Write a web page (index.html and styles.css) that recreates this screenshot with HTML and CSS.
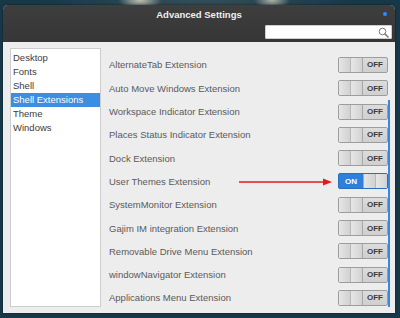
FILE: index.html
```html
<!DOCTYPE html>
<html lang="en">
<head>
    <meta charset="UTF-8">
    <title>Advanced Settings</title>
    <link rel="stylesheet" href="styles.css">
</head>
<body>

<div class="window">
    <div class="titlebar">
        <div class="title">Advanced Settings</div>
        <span class="dot"></span>
        <div class="search">
            <svg width="11" height="11" viewBox="0 0 11 11">
                <circle cx="4.5" cy="4.5" r="3.3" fill="none" stroke="#7a7a7a" stroke-width="1"/>
                <path d="M7 7 L10 10" stroke="#7a7a7a" stroke-width="1.5" stroke-linecap="round"/>
            </svg>
        </div>
    </div>

    <div class="content">
        <ul class="sidebar">
            <li>Desktop</li>
            <li>Fonts</li>
            <li>Shell</li>
            <li class="selected">Shell Extensions</li>
            <li>Theme</li>
            <li>Windows</li>
        </ul>

        <div class="extensions">
            <div class="row"><span>AlternateTab Extension</span><div class="switch"><div class="knob"></div><b>OFF</b></div></div>
            <div class="row"><span>Auto Move Windows Extension</span><div class="switch"><div class="knob"></div><b>OFF</b></div></div>
            <div class="row"><span>Workspace Indicator Extension</span><div class="switch"><div class="knob"></div><b>OFF</b></div></div>
            <div class="row"><span>Places Status Indicator Extension</span><div class="switch"><div class="knob"></div><b>OFF</b></div></div>
            <div class="row"><span>Dock Extension</span><div class="switch"><div class="knob"></div><b>OFF</b></div></div>
            <div class="row"><span>User Themes Extension</span><div class="switch on"><b>ON</b><div class="knob"></div></div></div>
            <div class="row"><span>SystemMonitor Extension</span><div class="switch"><div class="knob"></div><b>OFF</b></div></div>
            <div class="row"><span>Gajim IM integration Extension</span><div class="switch"><div class="knob"></div><b>OFF</b></div></div>
            <div class="row"><span>Removable Drive Menu Extension</span><div class="switch"><div class="knob"></div><b>OFF</b></div></div>
            <div class="row"><span>windowNavigator Extension</span><div class="switch"><div class="knob"></div><b>OFF</b></div></div>
            <div class="row"><span>Applications Menu Extension</span><div class="switch"><div class="knob"></div><b>OFF</b></div></div>

            <div class="scrollbar"></div>
            <svg class="arrow" width="94" height="10" viewBox="0 0 94 10">
                <path d="M0 5 H86" stroke="#e41a1a" stroke-width="1.6"/>
                <path d="M84 1.5 L93 5 L84 8.5 Z" fill="#e41a1a"/>
            </svg>
        </div>
    </div>
</div>

</body>
</html>
```

FILE: styles.css
```css
html, body {
    margin: 0;
    padding: 0;
}
body {
    width: 400px;
    height: 318px;
    overflow: hidden;
    font-family: 'Liberation Sans', Arial, sans-serif;
    background:
        radial-gradient(ellipse 22px 10px at 140px 0px, rgba(230, 225, 200, 0.8), transparent),
        radial-gradient(ellipse 18px 9px at 272px 0px, rgba(230, 225, 200, 0.7), transparent),
        radial-gradient(ellipse 160px 14px at 200px 0px, rgba(60, 80, 90, 0.9), transparent),
        #173848;
}
.window {
    margin: 5px 5px 0 3px;
    width: 392px;
    height: 308px;
    border-radius: 5px 5px 0 0;
    overflow: hidden;
    background-color: #ededed;
    box-shadow: 0 0 2px rgba(0, 0, 0, 0.6);
}
.titlebar {
    position: relative;
    height: 37px;
    background: linear-gradient(#3e3e3e, #363636);
}
.title {
    padding-top: 4px;
    text-align: center;
    color: #f0f0f0;
    font-size: 9.5px;
    font-weight: bold;
}
.dot {
    position: absolute;
    top: 7px;
    right: 8px;
    width: 4px;
    height: 4px;
    border-radius: 50%;
    background-color: #2a8cff;
}
.search {
    position: absolute;
    top: 20px;
    right: 3px;
    width: 127px;
    height: 14px;
    background-color: #fff;
    border: 1px solid #cfcfcf;
    box-sizing: border-box;
    border-radius: 1px;
    display: flex;
    justify-content: flex-end;
    align-items: center;
    padding-right: 2px;
}
.content {
    display: flex;
    height: 271px;
    padding: 6px 0 6px 7px;
    box-sizing: border-box;
}
.sidebar {
    list-style: none;
    margin: 0;
    padding: 2px 0 0 0;
    width: 91px;
    box-sizing: border-box;
    background-color: #fff;
    border: 1px solid #cdcdcd;
    flex-shrink: 0;
}
.sidebar li {
    height: 14px;
    line-height: 14px;
    padding-left: 2px;
    font-size: 9.5px;
    color: #3c3c3c;
}
.sidebar li.selected {
    background-color: #3d8de0;
    color: #fff;
}
.extensions {
    position: relative;
    flex: 1;
    padding: 5.35px 7px 0 8px;
}
.row {
    height: 23.3px;
    display: flex;
    align-items: center;
    justify-content: space-between;
    font-size: 9.5px;
    color: #5a5a5a;
}
.switch {
    width: 50px;
    height: 16px;
    box-sizing: border-box;
    border: 1px solid #9d9d9d;
    border-radius: 2px;
    background: linear-gradient(#dcdcdc, #cfcfcf);
    display: flex;
    align-items: center;
}
.switch b {
    flex: 1;
    text-align: center;
    font-size: 8px;
    color: #3a3a3a;
}
.knob {
    width: 24px;
    height: 14px;
    box-sizing: border-box;
    border-right: 1px solid #a8a8a8;
    background:
        linear-gradient(90deg, transparent 11px, #b8b8b8 11px, #b8b8b8 12px, transparent 12px),
        linear-gradient(90deg, #e6e6e6, #d2d2d2 45%, #e6e6e6 55%, #d2d2d2);
}
.switch.on {
    background: #2f80d8;
    border-color: #2a6fbd;
}
.switch.on b {
    color: #fff;
}
.switch.on .knob {
    border-right: none;
    border-left: 1px solid #a8a8a8;
}
.scrollbar {
    position: absolute;
    top: 52px;
    bottom: 0;
    right: 5px;
    width: 2px;
    background-color: #3a86e0;
}
.arrow {
    position: absolute;
    top: 129px;
    left: 138px;
}
```
